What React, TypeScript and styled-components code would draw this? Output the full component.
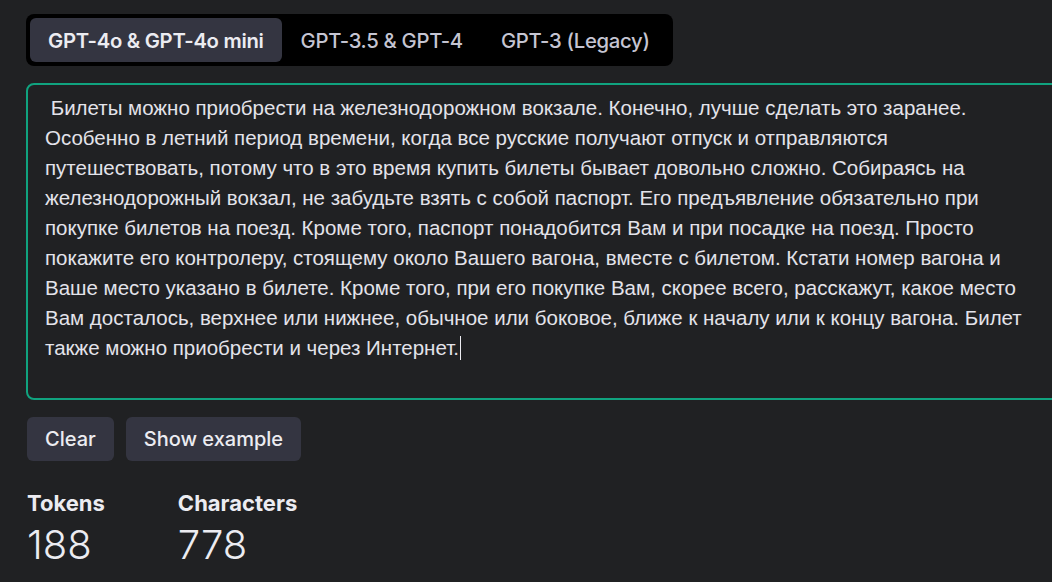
import { FC } from 'react';
import styled, { createGlobalStyle } from 'styled-components';

const GlobalStyle = createGlobalStyle`
    html, body {
        margin: 0;
        padding: 0;
        background: #202123;
        overflow: hidden;
    }
`;

const Page = styled.div`
    width: 1100px;
    padding: 14px 0 0 26px;
    font-family: Inter, "Liberation Sans", sans-serif;
    color: #ececf1;
`;

const Tabs = styled.div`
    display: inline-flex;
    padding: 4px;
    background: #000;
    border-radius: 8px;
`;

const Tab = styled.div<{ $active?: boolean }>`
    height: 44px;
    display: flex;
    align-items: center;
    padding: 0 ${p => (p.$active ? '18px' : '19px')};
    border-radius: 6px;
    font-size: 20.3px;
    font-weight: ${p => (p.$active ? 600 : 500)};
    letter-spacing: -0.3px;
    background: ${p => (p.$active ? '#343541' : 'transparent')};
    color: ${p => (p.$active ? '#ececf1' : '#c5c5d2')};
`;

const Editor = styled.div`
    margin-top: 17px;
    height: 317px;
    box-sizing: border-box;
    border: 2px solid #10a37f;
    border-radius: 8px;
    padding: 8px 0 0 17px;
    width: 1060px;
    font-family: "Liberation Sans", Arial, sans-serif;
    font-size: 20.5px;
    line-height: 30px;
    color: #e3e3ea;
    white-space: pre-wrap;
`;

const EditorText = styled.div`
    width: 980px;
`;

const Caret = styled.span`
    display: inline-block;
    width: 1.5px;
    height: 24px;
    margin-left: 1px;
    vertical-align: -5px;
    background: #ececf1;
`;

const Actions = styled.div`
    display: flex;
    gap: 12px;
    margin: 17px 0 0 1px;
`;

const Button = styled.button`
    height: 44px;
    padding: 0 18px;
    border: none;
    border-radius: 6px;
    background: #343541;
    color: #ececf1;
    font-family: Inter, "Liberation Sans", sans-serif;
    font-size: 20px;
    font-weight: 500;
`;

const Stats = styled.div`
    display: flex;
    gap: 73px;
    margin: 29px 0 0 1px;
`;

const Stat = styled.div`
    display: flex;
    flex-direction: column;
`;

const StatLabel = styled.span`
    font-size: 22px;
    font-weight: 700;
    line-height: 26px;
`;

const StatValue = styled.span`
    margin-top: 5px;
    font-size: 40px;
    font-weight: 300;
    line-height: 48px;
`;

const text =
    ' Билеты можно приобрести на железнодорожном вокзале. Конечно, лучше сделать это заранее. Особенно в летний период времени, когда все русские получают отпуск и отправляются путешествовать, потому что в это время купить билеты бывает довольно сложно. Собираясь на железнодорожный вокзал, не забудьте взять с собой паспорт. Его предъявление обязательно при покупке билетов на поезд. Кроме того, паспорт понадобится Вам и при посадке на поезд. Просто покажите его контролеру, стоящему около Вашего вагона, вместе с билетом. Кстати номер вагона и Ваше место указано в билете. Кроме того, при его покупке Вам, скорее всего, расскажут, какое место Вам досталось, верхнее или нижнее, обычное или боковое, ближе к началу или к концу вагона. Билет также можно приобрести и через Интернет.';

const App: FC = () => {
    return (
        <Page>
            <GlobalStyle />
            <Tabs>
                <Tab $active>GPT-4o &amp; GPT-4o mini</Tab>
                <Tab>GPT-3.5 &amp; GPT-4</Tab>
                <Tab>GPT-3 (Legacy)</Tab>
            </Tabs>
            <Editor>
                <EditorText>
                    {text}
                    <Caret />
                </EditorText>
            </Editor>
            <Actions>
                <Button>Clear</Button>
                <Button>Show example</Button>
            </Actions>
            <Stats>
                <Stat>
                    <StatLabel>Tokens</StatLabel>
                    <StatValue>188</StatValue>
                </Stat>
                <Stat>
                    <StatLabel>Characters</StatLabel>
                    <StatValue>778</StatValue>
                </Stat>
            </Stats>
        </Page>
    );
};

export default App;
